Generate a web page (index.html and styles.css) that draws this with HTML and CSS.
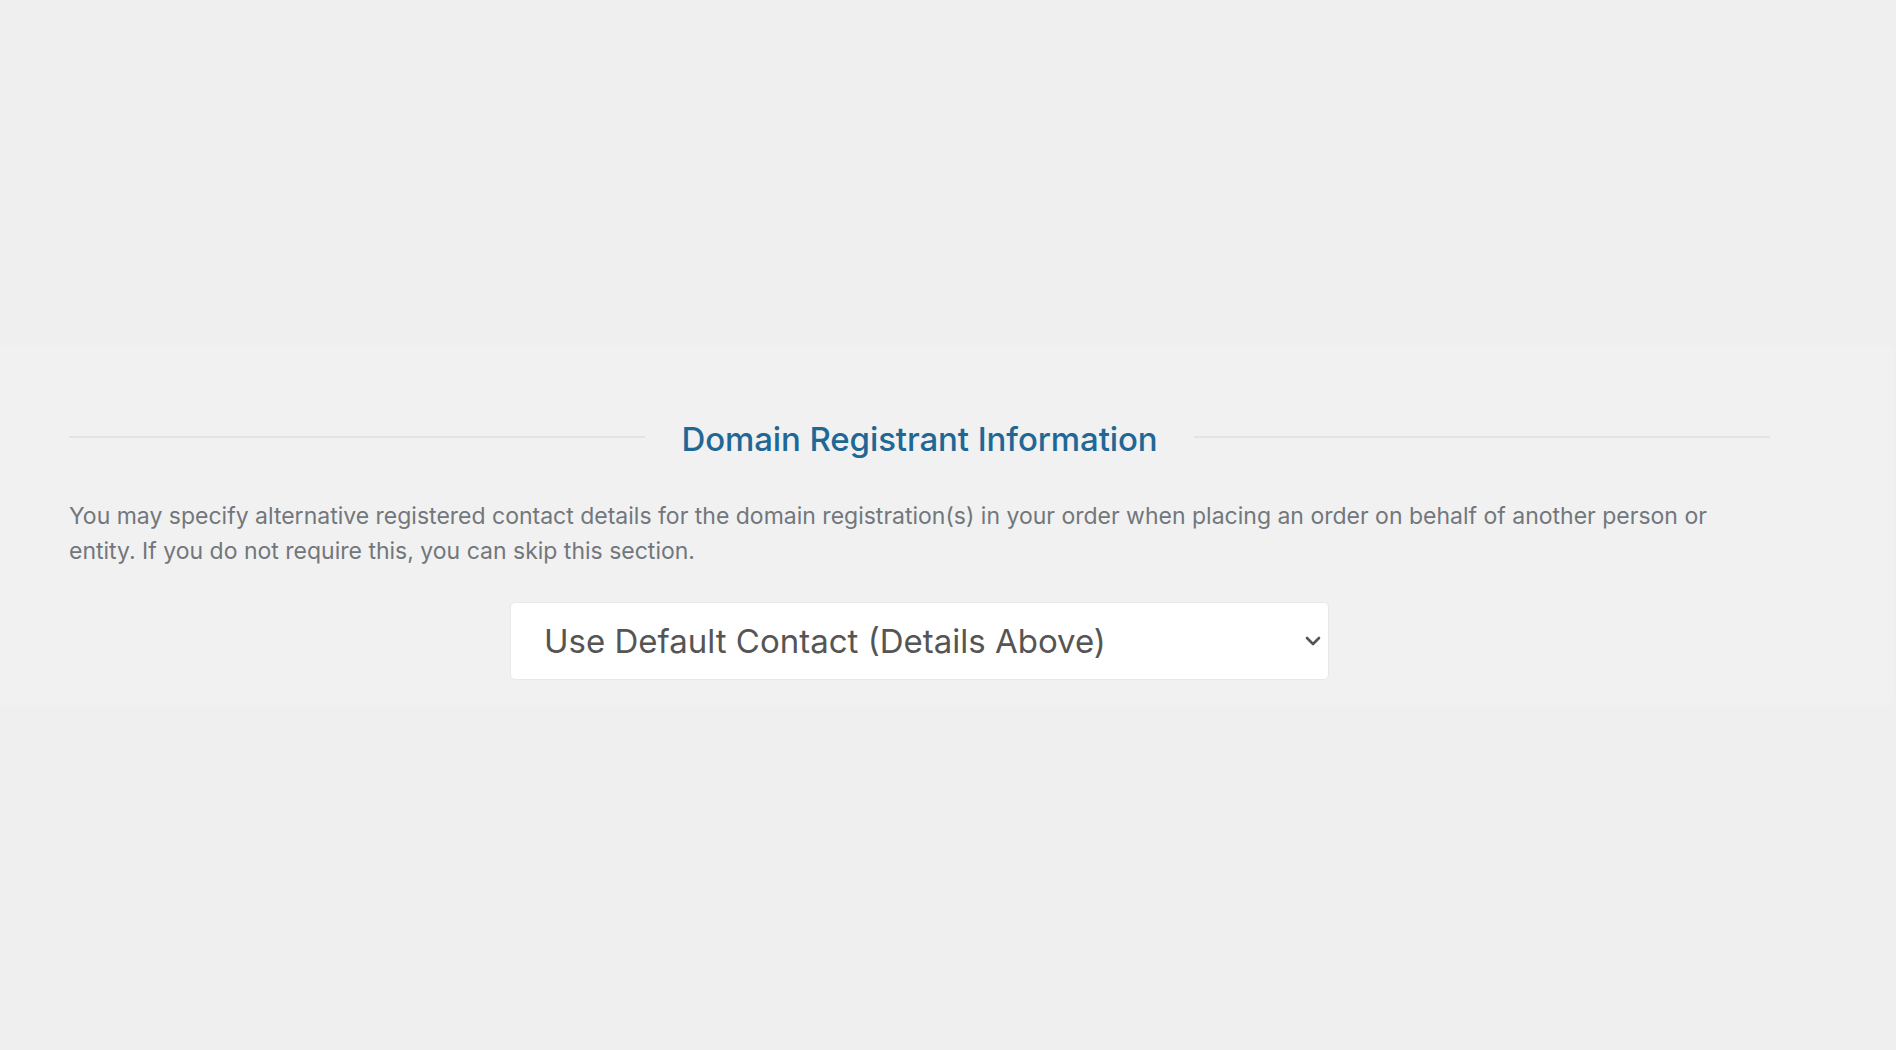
FILE: index.html
```html
<!DOCTYPE html>
<html lang="en">
<head>
  <meta charset="UTF-8" />
  <meta name="viewport" content="width=device-width, initial-scale=1.0"/>
  <title>Domain Registrant Information</title>
  <link rel="stylesheet" href="styles.css">
</head>
<body>
  <div class="page">
    <div class="panel">
      <div class="sub-heading">
        <span class="line"></span>
        <h2>Domain Registrant Information</h2>
        <span class="line"></span>
      </div>

      <p class="info">You may specify alternative registered contact details for the domain registration(s) in your order when placing an order on behalf of another person or entity. If you do not require this, you can skip this section.</p>

      <div class="select-wrap">
        <select id="contact" class="contact-select">
          <option value="">Use Default Contact (Details Above)</option>
          <option value="new">Add New Contact...</option>
        </select>
        <svg class="chevron" viewBox="0 0 16 16" width="16" height="16">
          <path d="M2 5l6 6 6-6" fill="none" stroke="#555" stroke-width="2.6" stroke-linecap="round" stroke-linejoin="round"/>
        </svg>
      </div>
    </div>
  </div>
</body>
</html>
```

FILE: styles.css
```css
body {
  margin: 0;
  background-color: #eeefee;
  font-family: Inter, 'Noto Sans', sans-serif;
}

.page {
  padding-top: 345px;
  min-height: 1050px;
  box-sizing: border-box;
}

.panel {
  background-color: #f1f1f1;
  border-radius: 0 6px 6px 0;
  margin-right: 3px;
  padding: 64px 123px 24px 69px;
  height: 360px;
  box-sizing: border-box;
}

.sub-heading {
  display: flex;
  align-items: center;
  gap: 36px;
  height: 60px;
}

.sub-heading .line {
  flex: 1;
  height: 2px;
  background-color: #e3e3e3;
  margin-top: -4px;
}

.sub-heading h2 {
  margin: 0;
  font-size: 33px;
  font-weight: 500;
  color: #1f6896;
  letter-spacing: -0.1px;
}

.info {
  margin: 30px 0 0;
  font-size: 23px;
  line-height: 35px;
  color: #72777c;
}

.select-wrap {
  position: relative;
  width: 819px;
  margin: 33px auto 0;
}

.contact-select {
  display: block;
  width: 100%;
  height: 78px;
  padding: 0 60px 0 33px;
  font-family: inherit;
  font-size: 33px;
  color: #555;
  background-color: #fff;
  border: 1px solid #e8e8e8;
  border-radius: 5px;
  appearance: none;
  -webkit-appearance: none;
  box-sizing: border-box;
}

.chevron {
  position: absolute;
  right: 8px;
  top: 31px;
  pointer-events: none;
}
```
